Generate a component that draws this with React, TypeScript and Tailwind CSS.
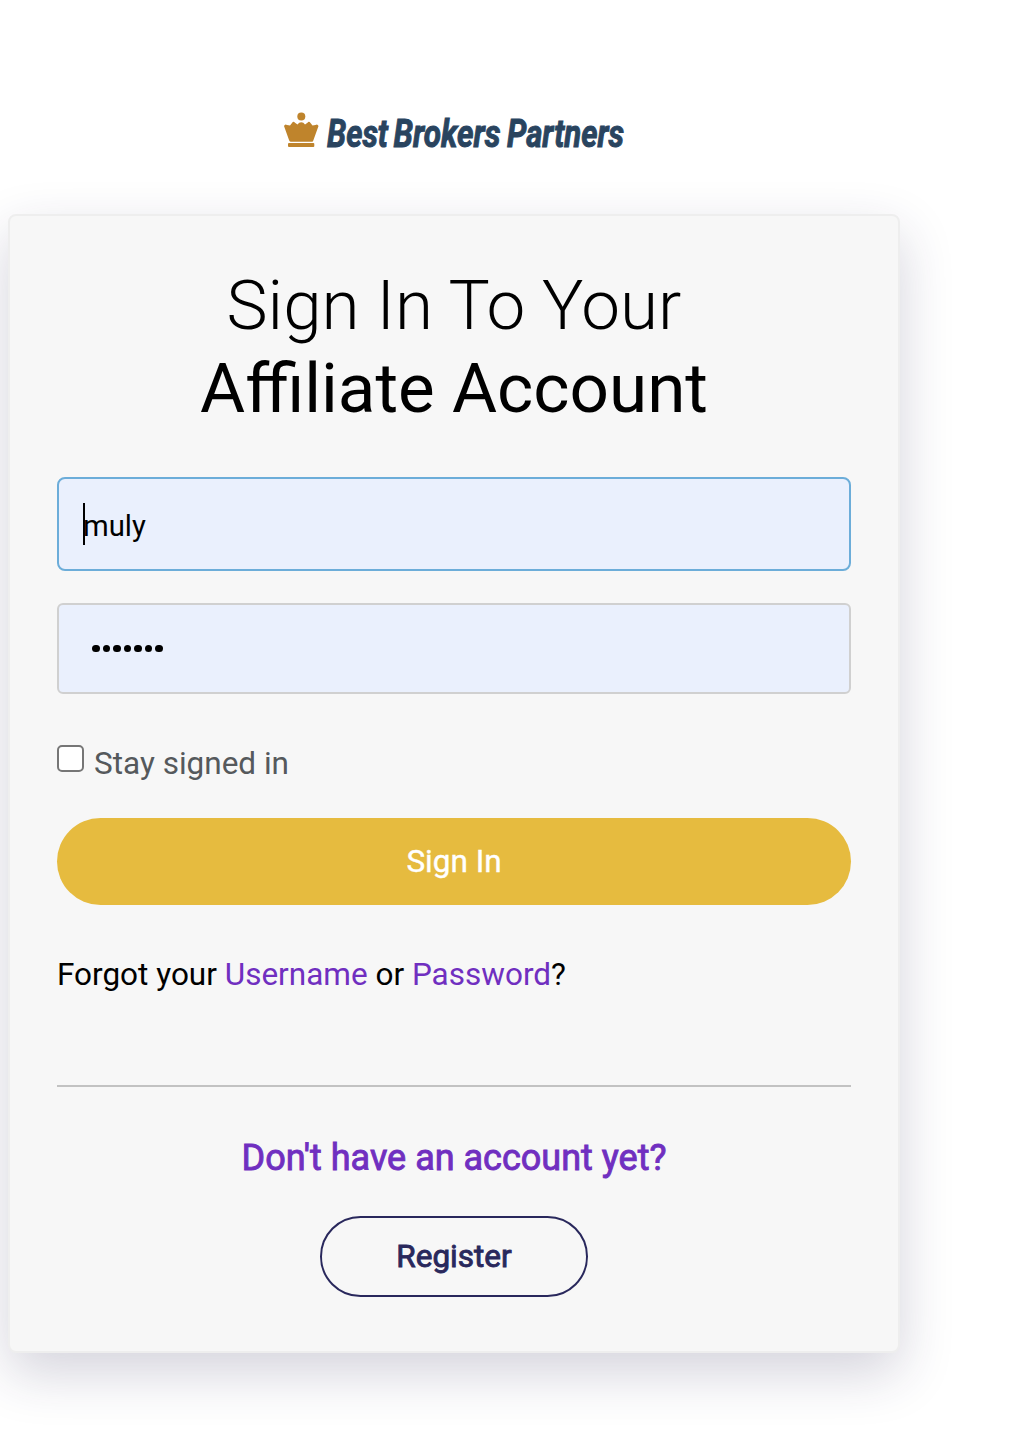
export default function App() {
  return (
    <div className="h-[1450px] w-full overflow-hidden bg-white font-[Roboto,sans-serif] text-black">
      <header className="flex h-[214px] w-[908px] items-start justify-center pt-[112px]">
        <svg className="h-[44px] w-[340px] overflow-visible" viewBox="0 0 340 44">
          <g fill="#bf842c">
            <circle cx="17.3" cy="4.5" r="4" />
            <path d="M0 14 Q1 11.5 3 13 L6 13.5 L8 11 Q9.5 8.7 11 10.8 L13.5 12.5 Q15 10.2 17.3 10.2 Q19.6 10.2 21 12.5 L23.5 10.8 Q25 8.7 26.5 11 L28.5 13.5 L31.5 13 Q33.5 11.5 34.5 14 L29.3 28.5 Q29 29.8 28 29.8 H7 Q5.7 29.8 5.2 28.5 Z" />
            <rect x="4" y="31" width="26.3" height="4" rx="1" />
          </g>
          <g fill="#29445f" stroke="#29445f" strokeWidth="1" fontFamily="Roboto" fontWeight="700" fontStyle="italic" fontSize="39.5">
            <text x="43" y="35" textLength="61" lengthAdjust="spacingAndGlyphs">Best</text>
            <text x="109.5" y="35" textLength="107" lengthAdjust="spacingAndGlyphs">Brokers</text>
            <text x="223" y="35" textLength="117" lengthAdjust="spacingAndGlyphs">Partners</text>
          </g>
        </svg>
      </header>
      <main className="ml-2 h-[1139px] w-[892px] rounded-lg border-2 border-[#eeeeee] bg-[#f7f7f7] px-[47px] shadow-[0_20px_54px_rgba(41,35,82,0.2)]">
        <h1 className="pt-[48px] text-center text-[69.2px] leading-[83px]"><span className="block font-light">Sign In To Your</span><span className="block">Affiliate Account</span></h1>
        <form className="mt-[47px]">
          <div className="flex h-[94px] items-center rounded-lg border-2 border-[#6cadd9] bg-[#eaf0fd] pl-6 text-[29.3px]"><span className="h-[42px] w-[2px] bg-black" /><span className="-ml-[2px] pt-[5px]">muly</span></div>
          <div className="mt-8 flex h-[91px] items-center gap-[3px] rounded-md border-2 border-[#d0d0d0] bg-[#eaf0fd] pl-[33px]">{Array.from({ length: 7 }, (_, i) => <i key={i} className="size-[7.5px] rounded-full bg-black" />)}</div>
          <label className="mt-[51px] flex h-[37px] text-[31.5px] leading-[37px] text-[#55595c]"><span className="mr-[10px] size-[27px] rounded-[5px] border-2 border-[#767676] bg-white" />Stay signed in</label>
          <button className="mt-[36px] h-[87px] w-full rounded-full bg-[#e6bb3f] text-[31.5px] text-white [-webkit-text-stroke:0.4px_white]">Sign In</button>
        </form>
        <p className="mt-[51px] text-[31.5px] leading-[38px]">Forgot your <a className="text-[#702fc0]">Username</a> or <a className="text-[#702fc0]">Password</a>?</p>
        <hr className="mt-[91px] border-t-2 border-[#c2c2c2]" />
        <h2 className="mt-[50px] text-center text-[36px] leading-[42px] text-[#702fc0] [-webkit-text-stroke:0.9px_#702fc0]">Don't have an account yet?</h2>
        <button className="mx-auto mt-[37px] block h-[81px] w-[268px] rounded-full border-2 border-[#29285c] text-[31.5px] text-[#29285c] [-webkit-text-stroke:0.9px_#29285c]">Register</button>
      </main>
    </div>
  );
}
